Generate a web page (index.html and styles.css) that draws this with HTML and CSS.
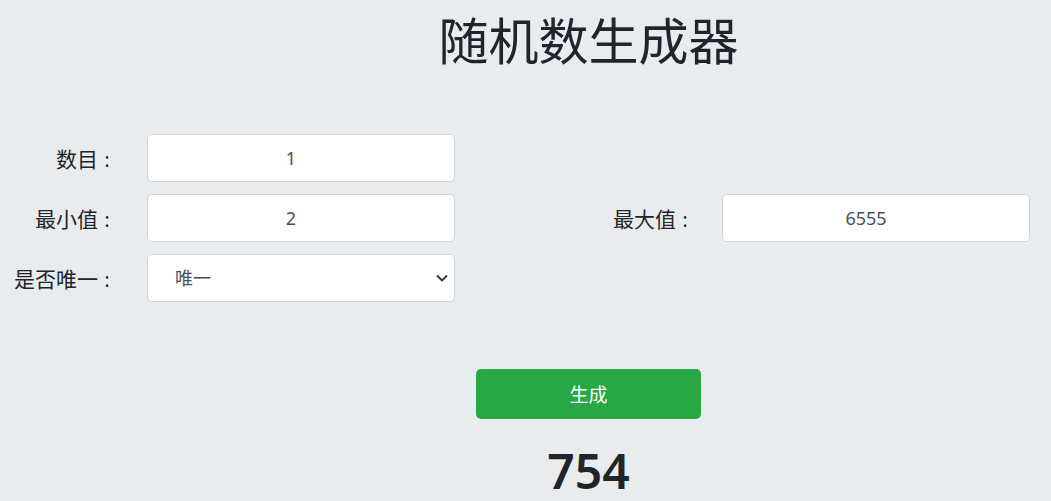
FILE: index.html
```html
<!DOCTYPE html>
<html lang="zh-CN">
<head>
<meta charset="utf-8">
<title>随机数生成器</title>
<link rel="stylesheet" href="styles.css">
</head>
<body>
  <header class="hero">
    <h1 class="title">随机数生成器</h1>
  </header>
  <form class="form">
    <label class="label label-count" for="count">数目<span class="colon">:</span></label>
    <input class="field field-count" id="count" type="text" value="1">
    <label class="label label-min" for="min">最小值<span class="colon">:</span></label>
    <input class="field field-min" id="min" type="text" value="2">
    <label class="label label-max" for="max">最大值<span class="colon">:</span></label>
    <input class="field field-max" id="max" type="text" value="6555">
    <label class="label label-unique" for="unique">是否唯一<span class="colon">:</span></label>
    <select class="field select field-unique" id="unique">
      <option>唯一</option>
      <option>不唯一</option>
    </select>
  </form>
  <section class="hero actions">
    <button class="btn" type="button">生成</button>
    <div class="result">754</div>
  </section>
</body>
</html>
```
FILE: styles.css
```css
html, body {
  margin: 0;
  padding: 0;
}
body {
  background: #e9ecef;
  color: #212529;
  font-family: "Noto Sans", "Noto Sans CJK SC", sans-serif;
  width: 1051px;
  height: 501px;
  overflow: hidden;
}
.hero {
  padding-left: 126px;
  text-align: center;
}
.title {
  margin: 0;
  padding-top: 11px;
  font-size: 50px;
  font-weight: 400;
  line-height: 60px;
}
.form {
  display: grid;
  grid-template-columns: 147px 308px 1fr 308px;
  grid-template-rows: 48px 48px 48px;
  row-gap: 12px;
  padding-right: 21px;
  margin-top: 63px;
}
.label {
  font-family: "Noto Sans CJK SC", sans-serif;
  font-size: 21px;
  line-height: 48px;
  text-align: right;
  padding-right: 31px;
  white-space: nowrap;
}
.colon {
  display: inline-block;
  width: 18px;
  text-align: center;
  font-family: "Noto Sans", sans-serif;
  font-size: 19px;
}
.label-count { grid-area: 1 / 1; }
.field-count { grid-area: 1 / 2; }
.label-min { grid-area: 2 / 1; }
.field-min { grid-area: 2 / 2; }
.label-max { grid-area: 2 / 3; padding-right: 28px; }
.field-max { grid-area: 2 / 4; }
.label-unique { grid-area: 3 / 1; }
.field-unique { grid-area: 3 / 2; }
.field {
  box-sizing: border-box;
  width: 100%;
  height: 48px;
  margin: 0;
  border: 1px solid #ced4da;
  border-radius: 5px;
  background: #fff;
  color: #495057;
  font-family: "Noto Sans", "Noto Sans CJK SC", sans-serif;
  font-size: 18px;
  text-align: center;
  padding: 0 26px 0 6px;
  outline: none;
}
.select {
  appearance: none;
  -webkit-appearance: none;
  text-align: left;
  padding-left: 27px;
  background-image: url("data:image/svg+xml,%3Csvg xmlns='http://www.w3.org/2000/svg' width='12' height='8' viewBox='0 0 12 8'%3E%3Cpath d='M1 1.5l5 5 5-5' fill='none' stroke='%23333' stroke-width='1.8'/%3E%3C/svg%3E");
  background-repeat: no-repeat;
  background-position: right 6px center;
  background-size: 12px 8px;
}
.actions {
  margin-top: 67px;
}
.btn {
  width: 225px;
  height: 50px;
  border: 0;
  border-radius: 5px;
  background: #28a745;
  color: #fff;
  font-family: "Noto Sans", "Noto Sans CJK SC", sans-serif;
  font-size: 19px;
  cursor: pointer;
}
.result {
  margin-top: 27px;
  font-size: 48px;
  font-weight: 600;
  line-height: 50px;
}
```
